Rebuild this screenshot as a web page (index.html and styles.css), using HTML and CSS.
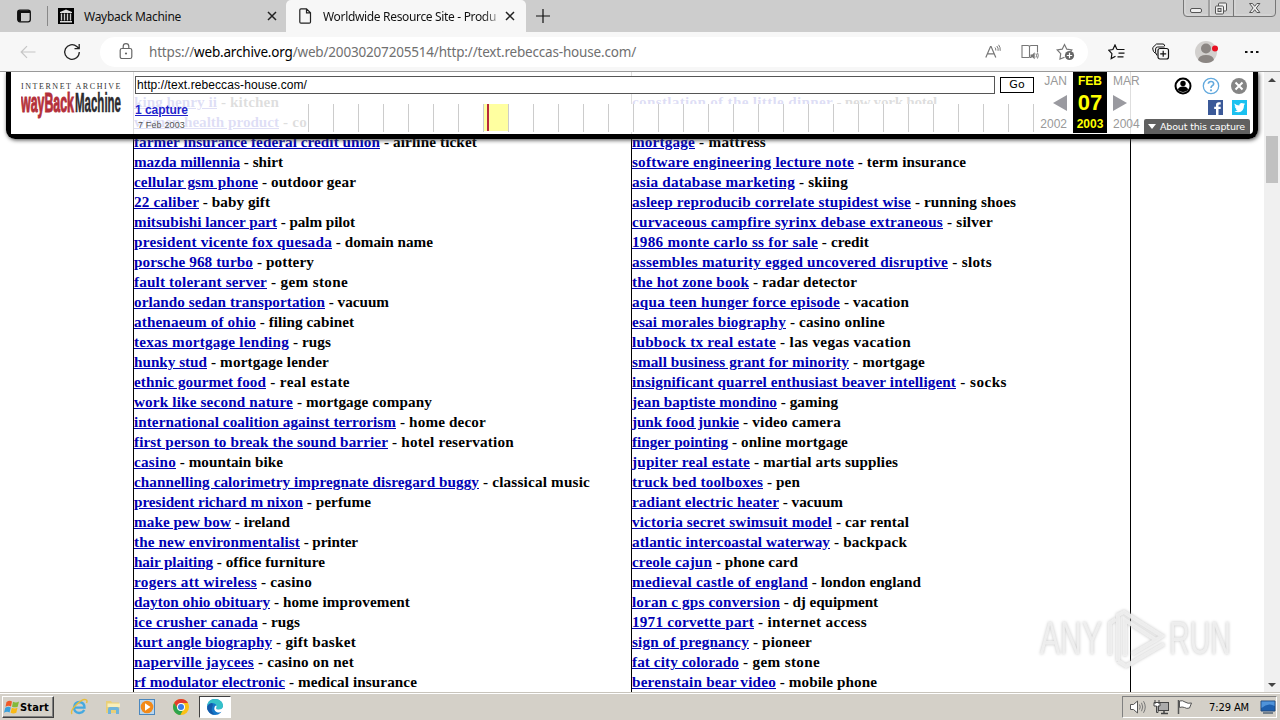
FILE: index.html
```html
<!DOCTYPE html>
<html lang="en">
<head>
<meta charset="utf-8">
<title>Worldwide Resource Site</title>
<link rel="stylesheet" href="styles.css">
</head>
<body>
<div class="tabs">
  <svg class="tab-actions" width="16" height="16" viewBox="0 0 16 16"><rect x="1.7" y="2.2" width="12.6" height="11.600" rx="2.2" fill="none" stroke="#111" stroke-width="1.3"/><path d="M2 2.500h12v2.500H5V13.500H2z" fill="#111"/></svg>
  <div class="tab">
    <svg width="16" height="16" viewBox="0 0 16 16"><rect width="16" height="16" fill="#000"/><path d="M8 1.5 14 4v1H2V4zM2 13h12v1.5H2z" fill="#ddd"/><path d="M3.5 5.5v7M6.5 5.5v7M9.5 5.5v7M12.5 5.5v7" stroke="#ccc" stroke-width="1.4"/></svg>
    <span class="tab-title" data-w="97">Wayback Machine</span>
    <svg class="x" width="10" height="10" viewBox="0 0 10 10"><path d="M1 1l8 8M9 1l-8 8" stroke="#222" stroke-width="1.5"/></svg>
  </div>
  <div class="tab active">
    <svg width="14" height="16" viewBox="0 0 14 16"><path d="M3 .8h5.500l4 4V14q0 1.200-1.200 1.200H3q-1.200 0-1.200-1.200V2Q1.800 .8 3 .8zM8.500 .8v4h4" fill="none" stroke="#222" stroke-width="1.200"/></svg>
    <span class="tab-title fade" data-w="173">Worldwide Resource Site - Produ</span>
    <svg class="x" width="10" height="10" viewBox="0 0 10 10"><path d="M1 1l8 8M9 1l-8 8" stroke="#222" stroke-width="1.5"/></svg>
  </div>
  <svg class="plus" width="14" height="14" viewBox="0 0 14 14"><path d="M7 0v14M0 7h14" stroke="#111" stroke-width="1.2"/></svg>
  <svg class="winbtns" width="94" height="17" viewBox="0 0 94 17"><path d="M.5 0v13q0 3.500 3.500 3.500h85q3.500 0 3.500-3.500V0M26 0v16M50.500 0v16" fill="none" stroke="#777"/><path d="M2 0v12q0 3 3 3h20M27.500 0v15H49M52 0v15h36" fill="none" stroke="#ddd" stroke-width=".8"/><rect x="7.500" y="8.500" width="11" height="4" rx="1.500" fill="#eee" stroke="#555"/><rect x="35.500" y="3" width="8" height="8" rx="1" fill="#eee" stroke="#555"/><rect x="32.500" y="6" width="8" height="8" rx="1" fill="#eee" stroke="#555"/><rect x="35" y="8.500" width="3" height="3" fill="#ccc" stroke="#555"/><path d="M66.500 3.500h3l2.200 2.800 2.200-2.800h3l-3.600 4.500 3.600 4.500h-3l-2.200-2.800-2.200 2.800h-3L70.100 8z" fill="#eee" stroke="#555"/></svg>
</div>
<div class="toolbar">
  <svg class="back" width="16" height="14" viewBox="0 0 16 14"><path d="M15.500 7H1.500M7 1.200 1.200 7 7 12.800" fill="none" stroke="#c6c6c6" stroke-width="1.200"/></svg>
  <svg class="reload" width="18" height="18" viewBox="0 0 18 18"><path d="M16.300 9A7.300 7.300 0 1 1 13.800 3.500L16 5.500M16.200 1v4.700h-4.700" fill="none" stroke="#222" stroke-width="1.300"/></svg>
  <div class="address">
    <svg width="14" height="18" viewBox="0 0 14 18"><rect x="1.200" y="5.500" width="11.600" height="10" rx="1.800" fill="none" stroke="#666" stroke-width="1.200"/><path d="M4.200 5.500V3.500a2.800 2.800 0 0 1 5.600 0v2" fill="none" stroke="#666" stroke-width="1.200"/><circle cx="7" cy="10.500" r="1.100" fill="#666"/></svg>
    <span class="url" data-w="487">https://<b>web.archive.org</b>/web/20030207205514/http://text.rebeccas-house.com/</span>
    <svg class="aloud" width="16" height="16" viewBox="0 0 16 16"><path d="M.8 13.500 5.500 2.500h.6l4.700 11M2.500 9.800h6.600" fill="none" stroke="#777" stroke-width="1.200"/><path d="M10 3.500q1 1.300.8 3M11.800 2q1.800 2 1.300 4.800M13.600.8q2 2.500 1.600 6" fill="none" stroke="#777"/></svg>
    <svg class="reader" width="18" height="16" viewBox="0 0 18 16"><path d="M8.500 2v11.500M8 13.500H1V1.500h6q1.500 0 1.500 1 0-1 1.500-1h6.500V8M8.500 13.500h2" fill="none" stroke="#777" stroke-width="1.100"/><path d="M9.500 10.500h1.800l2.400-2.200v7l-2.400-2H9.500z" fill="#777"/><path d="M15 9.500q1 2 0 4M16.500 8.500q1.500 3 0 6" fill="none" stroke="#777"/></svg>
    <svg class="fav" width="19" height="18" viewBox="0 0 19 18"><path d="M8.500 14.200 4 16l.7-5.300L1.200 7l5-.8L8.500 1.500l2.300 4.700 5 .8-1.300 1.600" fill="none" stroke="#777" stroke-width="1.200"/><circle cx="13.500" cy="12.500" r="4.600" fill="#666"/><path d="M13.500 9.800v5.400M10.800 12.500h5.400" stroke="#fff" stroke-width="1.200"/></svg>
  </div>
  <svg class="favs" width="18" height="16" viewBox="0 0 18 16"><path d="M9 5.500 7 1 4.900 5.500.8 6.200 3.900 9.700 3.200 14.600 7.500 12.200M9 5.500h7.500M10.500 9.200h6M9.500 12.800h6" fill="none" stroke="#111" stroke-width="1.200"/></svg>
  <svg class="coll" width="18" height="17" viewBox="0 0 18 17"><path d="M3.500 10.500Q.8 8.500.8 6V4.500L4.500 1H11q1.500 0 1.700 2M5 12.500 3.600 9.500V6q0-2 2-2h7" fill="none" stroke="#111" stroke-width="1"/><rect x="6" y="5.500" width="10.500" height="10.500" rx="2" fill="#f7f7f7" stroke="#111" stroke-width="1.200"/><path d="M11.200 7.800v6M8.200 10.800h6" stroke="#111" stroke-width="1.200"/></svg>
  <svg class="avatar" width="24" height="24" viewBox="0 0 24 24"><circle cx="11" cy="12" r="11" fill="#d2d0ce"/><circle cx="11" cy="8.500" r="5" fill="#8b8683"/><path d="M3 20q1-5 8-5t8 5q-3 3-8 3t-8-3z" fill="#8b8683"/><circle cx="20" cy="8.500" r="3" fill="#e81123"/></svg>
  <svg class="dots" width="14" height="4" viewBox="0 0 14 4"><path d="M0 1h2.500v2H0zM5.500 1H8v2H5.500zM11 1h2.500v2H11z" fill="#111"/></svg>
</div>
<div class="view">
  <div class="page">
    <div class="col" id="left"></div>
    <div class="col" id="right"></div>
  </div>
  <div class="scroll">
    <svg width="8" height="4" viewBox="0 0 8 4"><path d="M4 0 8 4H0z" fill="#444"/></svg>
    <div class="thumb"></div>
    <svg width="8" height="4" viewBox="0 0 8 4"><path d="M0 0h8L4 4z" fill="#444"/></svg>
  </div>
  <div class="wayback">
    <div class="logo">
      <span class="ia" data-w="101">INTERNET ARCHIVE</span>
      <svg width="102" height="34" viewBox="0 0 102 34"><g font-family="Liberation Sans Narrow, Liberation Sans, sans-serif" font-weight="bold" font-size="22"><text transform="translate(0 22) scale(1 1.250)" textLength="53" lengthAdjust="spacingAndGlyphs" fill="#b4303a" stroke="#b4303a" stroke-width=".9">wayBack</text><text transform="translate(54 22) scale(1 1.250)" textLength="46" lengthAdjust="spacingAndGlyphs" fill="#2b2b2f" stroke="#2b2b2f" stroke-width=".4">Machine</text></g></svg>
    </div>
    <div class="middle">
      <div class="query"><div class="field"><span data-w="170">http://text.rebeccas-house.com/</span></div><div class="go">Go</div></div>
      <div class="graph-row">
        <div class="captures"><a data-w="53">1 capture</a><span data-w="47">7 Feb 2003</span></div>
        <div class="graph"><div class="year"></div></div>
      </div>
    </div>
    <div class="cal side prev"><span>JAN</span><svg width="14" height="16" viewBox="0 0 14 16"><path d="M14 0v16L0 8z" fill="#9a9aa0"/></svg><span>2002</span></div>
    <div class="cal now"><b>FEB</b><b class="day">07</b><b>2003</b></div>
    <div class="cal side next"><span>MAR</span><svg width="14" height="16" viewBox="0 0 14 16"><path d="M0 0v16l14-8z" fill="#9a9aa0"/></svg><span>2004</span></div>
    <div class="tools">
      <div class="icons">
        <svg width="18" height="18" viewBox="0 0 18 18"><circle cx="9" cy="9" r="7.500" fill="#fff" stroke="#000" stroke-width="2"/><circle cx="9" cy="6.500" r="2.700"/><path d="M4 13q0-3.500 5-3.500t5 3.500q-2 2-5 2t-5-2z"/></svg>
        <svg width="18" height="18" viewBox="0 0 18 18"><circle cx="9" cy="9" r="7.700" fill="#fff" stroke="#62a9dd" stroke-width="1.300"/><path d="M6.300 6.800Q6.500 4.500 9 4.500t2.700 2.200Q11.700 8 10.200 8.800 9 9.500 9 11" fill="none" stroke="#62a9dd" stroke-width="1.600"/><circle cx="9" cy="13.300" r="1.100" fill="#62a9dd"/></svg>
        <svg width="18" height="18" viewBox="0 0 18 18"><circle cx="9" cy="9" r="8" fill="#858585"/><path d="M5.500 5.500l7 7M12.500 5.500l-7 7" stroke="#fff" stroke-width="2"/></svg>
      </div>
      <div class="social">
        <svg width="15" height="15" viewBox="0 0 15 15"><rect width="15" height="15" fill="#3b5998"/><path d="M10.500 15V9h2.200V6.700h-2.200V5.300q0-.8 1-.8h1.200V2.200h-2Q8 2.200 8 5v1.700H6.200V9H8v6z" fill="#fff"/></svg>
        <svg width="15" height="15" viewBox="0 0 15 15"><rect width="15" height="15" fill="#1bc1f0"/><path d="M2.500 3.500Q4.500 5.500 7.300 5.600 7.300 3 9.800 3q1 0 1.600.6l1.400-.5-.8 1.200 1-.2-1 1.200Q12 11.800 6.500 12.300q-2.500 0-4.200-1 2 0 3.300-1-1.700-.3-2-1.700h1Q2.800 7.800 2.700 6.200l1 .2Q2 5 2.500 3.500z" fill="#fff"/></svg>
      </div>
      <div class="about"><svg width="8" height="5" viewBox="0 0 8 5"><path d="M0 0h8L4 5z" fill="#fff"/></svg><span data-w="85">About this capture</span></div>
    </div>
  </div>
  <svg class="watermark" width="200" height="70" viewBox="0 0 200 70">
    <g class="shade"><text x="4" y="50" textLength="62" lengthAdjust="spacingAndGlyphs">ANY</text><text x="133" y="50" textLength="62" lengthAdjust="spacingAndGlyphs">RUN</text>
    <path d="M74 51V19l6-4M82 57V11l6-3 38 24-6 4-31-20v36M90 62l38-22M82 57l8 5 6-3M96 50l24-14"/></g>
  </svg>
</div>
<div class="taskbar">
  <div class="start">
    <svg width="16" height="16" viewBox="0 0 16 16"><path d="M2.500 3q3-2 5.500-.5L7 7.500Q4.500 6 1.500 7.800z" fill="#ef5a28"/><path d="M9 2.700q3 1.500 6-.2L13.700 7.700Q11 9 8 7.700z" fill="#83b93b"/><path d="M1.300 8.800q3-1.800 5.500-.3l-1.200 5Q3 12 0 13.800z" fill="#39a0dc"/><path d="M7.800 8.800q3 1.500 5.700 0l-1.200 5q-3 1.500-5.700 0z" fill="#f9b916"/></svg>
    <b data-w="29">Start</b>
  </div>
  <div class="quick">
    <svg width="18" height="18" viewBox="0 0 18 18"><path d="M14.300 12Q12.500 15 9.200 15 4 14.500 4 9.500 4.500 4 9.500 4q5 .5 5 5.700H5" fill="none" stroke="#45a9e0" stroke-width="2.300"/><path d="M2 16Q0 13 6 7 13 0 16.500 2q1 1 0 3" fill="none" stroke="#e8bd3a" stroke-width="1.400"/></svg>
    <svg width="18" height="18" viewBox="0 0 18 18"><path d="M2 3h5l1 1.500h7V15H2z" fill="#e9cf78"/><path d="M3.500 5.500H16V9H3.500z" fill="#f8eebb"/><path d="M4 16v-5q0-2 2-2h7q2 0 2 2v5h-3v-4H7v4z" fill="#6fb4db"/></svg>
    <svg width="18" height="18" viewBox="0 0 18 18"><rect x="1.500" y="1.500" width="15" height="15" fill="#b9d6ef" stroke="#4b87be"/><circle cx="9" cy="9" r="6.300" fill="#f28a1a"/><path d="M7 5.300 12.500 9 7 12.700z" fill="#fff"/></svg>
    <svg width="18" height="18" viewBox="0 0 18 18"><circle cx="9" cy="9" r="8" fill="#fbc116"/><path d="M2.100 5A8 8 0 0 1 16 5H9L6 11z" fill="#e33b2e"/><path d="M2.100 5 6 11l5 1-2.700 5A8 8 0 0 1 2.100 5z" fill="#2da44e"/><circle cx="9" cy="9" r="4" fill="#fff"/><circle cx="9" cy="9" r="3" fill="#3b7de8"/></svg>
    <div class="pressed"><svg width="18" height="18" viewBox="0 0 18 18"><circle cx="9" cy="9" r="8" fill="#1477c9"/><path d="M1.200 8Q2 1 9 1q7.500.5 8 6.500.3 4-4.500 4-2.500 0-2.500-1.500 1-1 .5-2.500Q9.500 5 6 5 3 5.200 1.200 8z" fill="#35c1c9"/><path d="M10 10q1-1 .5-2.500-1 0-1.700 1-1.600 3.500 1.700 5.500 3 1.300 5.800-.5l.7.500-2 2.500 3-1V9.500l-1-.5q-1 2.500-4.500 2.500-2.500 0-2.500-1.500z" fill="#fff"/><path d="M7 7Q3.500 12 8.500 16.800 3 16 1.200 11 1 6 6 5z" fill="#155aa8"/></svg></div>
  </div>
  <div class="tray">
    <svg width="18" height="16" viewBox="0 0 18 16"><path d="M1.500 5.500h3L8.500 2v12l-4-3.500h-3z" fill="#fff" stroke="#555"/><path d="M10.500 5.500q1.500 2.500 0 5M12.500 3.800q2.500 4.200 0 8.400M14.500 2.200q3.500 5.800 0 11.600" fill="none" stroke="#777"/></svg>
    <svg width="18" height="16" viewBox="0 0 18 16"><rect x="5.500" y="3.500" width="10" height="8" fill="#aaa" stroke="#444"/><path d="M8 14.500h7M11 12v2" stroke="#444" stroke-width="1.500"/><path d="M2 1v4M6 1v4M1 3.500h6V7H5v6.500H3.500V7H1z" fill="#fff" stroke="#444"/></svg>
    <svg width="18" height="16" viewBox="0 0 18 16"><path d="M1.500 1v14" stroke="#555" stroke-width="1.500"/><path d="M2.500 2q3-1 5.500 1 3 2 6.500 1l-2 5q-3 1-5-.5-2.500-1-5 0z" fill="#fff" stroke="#555"/></svg>
    <span class="clock" data-w="40">7:29 AM</span>
    <svg width="16" height="14" viewBox="0 0 16 14"><path d="M1 1h14v10H1z" fill="#1d5fae" stroke="#244a7a"/><path d="M1.500 8Q8 2 14.500 6V1.500h-13z" fill="#4f93da"/><path d="M3 13h10" stroke="#567" stroke-width="1.500"/></svg>
  </div>
</div>
<script src="rows.js"></script>
</body>
</html>
```
FILE: styles.css
```css
* { box-sizing: border-box; }
body { margin: 0; width: 1280px; height: 720px; overflow: hidden; display: flex; flex-direction: column; font-family: "Liberation Sans", Arial, sans-serif; background: #fff; }
svg { display: block; flex: none; }
[data-w] { white-space: pre; }

.tabs { height: 32px; flex: none; background: #cdcdcd; display: flex; align-items: center; font: 12px "Noto Sans", "Open Sans", sans-serif; color: #111; }
.tab-actions { margin-left: 16px; }
.tab { width: 239px; height: 32px; margin-left: 15px; padding: 0 9px 0 10px; display: flex; align-items: center; border-left: 1px solid #888; border-image: linear-gradient(transparent 20%, #888 20%, #888 80%, transparent 80%) 1; }
.tab .tab-title { margin-left: 10px; }
.tab .x { margin-left: auto; }
.tab.active { background: #f7f7f7; margin-left: 0; width: 240px; border: 0; border-radius: 5px 5px 0 0; padding: 0 11px 0 12px; }
.active .tab-title { margin-left: 11px; }
.fade { -webkit-mask-image: linear-gradient(90deg, #000 92%, #0006); mask-image: linear-gradient(90deg, #000 92%, #0006); }
.plus { margin-left: 10px; }
.winbtns { margin-left: auto; margin-right: 3px; align-self: flex-start; }

.toolbar { height: 39px; flex: none; background: #f7f7f7; display: flex; align-items: center; }
.back { margin-left: 20px; }
.reload { margin-left: 27px; }
.address { margin-left: 19px; width: 988px; height: 30px; border-radius: 15px; background: #fff; display: flex; align-items: center; padding-left: 19px; }
.url { margin-left: 16px; font: 13.500px "Noto Sans", "Open Sans", sans-serif; color: #707070; }
.url b { font-weight: normal; color: #000; }
.aloud { margin-left: auto; }
.reader { margin-left: 20px; }
.fav { margin: 0 13px 0 17px; }
.favs { margin-left: 20px; }
.coll { margin-left: 26px; }
.avatar { margin-left: 25px; }
.dots { margin-left: 26px; }

.view { height: 622px; flex: none; position: relative; overflow: hidden; border-top: 1px solid #999; display: flex; }
.page { width: 998px; margin-left: 133px; display: flex; border-right: 1px solid #000; font: bold 15.200px/20px "Liberation Serif", "Times New Roman", serif; color: #000; }
.col { width: 498px; flex: none; border-left: 1px solid #000; padding-top: 20px; }
.col + .col { width: 499px; }
.row { height: 20px; white-space: pre; display: flex; }
.row a { color: #0000b4; text-decoration: underline; }
.scroll { width: 16px; margin-left: auto; background: #f0f0f0; display: flex; flex-direction: column; align-items: center; padding: 6px 0; }
.thumb { width: 12px; height: 47px; margin: 54px 0 auto; background: #c1c1c1; }

.wayback { position: absolute; left: 6px; top: 0; width: 1252px; height: 67px; border: 5px solid #000; border-top: 0; border-radius: 0 0 9px 9px; background: rgba(255,255,255,.87); background-clip: padding-box; box-shadow: 1px 1px 4px #444; display: flex; }
.logo { width: 122px; flex: none; padding: 10px 0 0 10px; background: #fff; }
.ia { display: block; font: 8px/9px "Liberation Serif", serif; color: #333; width: 101px; }
.logo svg { margin-top: -1px; }
.middle { width: 901px; flex: none; padding: 4px 0 0 2px; }
.query { display: flex; align-items: center; gap: 5px; }
.field { width: 860px; height: 18px; border: 1px solid #555; background: #fff; padding-left: 1px; font: 12px/16px "Liberation Sans", sans-serif; color: #000; }
.go { width: 34px; height: 16px; border: 1px solid #000; background: #fff; font: 11px/14px "DejaVu Sans", "Liberation Sans", sans-serif; text-align: center; }
.graph-row { display: flex; padding-top: 10px; }
.captures { width: 173px; height: 29px; color: #555; }
.captures a, .captures span { display: block; width: max-content; }
.captures a { font: bold 12px/14px "Liberation Sans", sans-serif; color: #2424cc; text-decoration: underline; margin-top: -1px; }
.captures span { font-size: 9px; line-height: 13px; margin: 2px 0 0 3px; }
.graph { width: 726px; height: 28px; background: repeating-linear-gradient(90deg, #ccc 0 1px, #fff 1px 25px); }
.year { width: 24px; height: 27px; margin-left: 176px; background: #ffffa0; border-left: 3px solid #ffffa0; }
.year::before { content: ""; display: block; width: 2px; height: 27px; background: #b8283c; }
.cal { width: 34px; height: 61px; flex: none; display: flex; flex-direction: column; align-items: center; justify-content: space-between; padding: 3px 0 2px; font-size: 12px; line-height: 13px; color: #999; }
.side span { white-space: nowrap; }
.prev { margin-left: 5px; padding-right: 6px; align-items: flex-end; }
.next { margin-left: 6px; align-items: flex-start; }
.now { background: #000; color: #ff0; }
.now .day { font-size: 22px; line-height: 22px; }
.tools { margin-left: -3px; width: 109px; flex: none; display: flex; flex-direction: column; }
.icons { display: flex; justify-content: flex-end; gap: 10px; padding: 5px 5px 0 0; }
.social { display: flex; justify-content: flex-end; gap: 9px; padding: 5px 6px 0 0; }
.about { width: 106px; height: 15px; margin-top: 4px; background: #606060; border-radius: 2px 2px 0 0; color: #fff; display: flex; align-items: center; gap: 4px; padding-left: 4px; font: 9.500px "DejaVu Sans", sans-serif; }
.watermark { position: absolute; left: 1036px; top: 532px; filter: drop-shadow(0 0 1.500px #bbb); }
.shade { fill: #f2f2f2; font: 46px "Liberation Sans Narrow", "Liberation Sans", sans-serif; opacity: .85; }
.shade path { fill: none; stroke: #f2f2f2; stroke-width: 4; }

.taskbar { height: 27px; flex: none; background: #d4d0c8; border-top: 1px solid #fff; box-shadow: 0 -1px #c8c4bc; display: flex; align-items: center; position: relative; }
.start { width: 52px; height: 22px; margin-left: 2px; background: #d4d0c8; border: 1px solid; border-color: #fff #404040 #404040 #fff; box-shadow: inset -1px -1px #808080; display: flex; align-items: center; padding-left: 1px; gap: 0; font-size: 11px; color: #000; font-family: "DejaVu Sans Condensed", "DejaVu Sans", sans-serif; }
.quick { display: flex; align-items: center; gap: 16px; margin-left: 16px; }
.pressed { width: 32px; height: 22px; margin-left: -7px; background: #fff; border: 1px solid; border-color: #404040 #fff #fff #404040; display: flex; align-items: center; justify-content: center; }
.tray { margin-left: auto; margin-right: 3px; width: 155px; height: 22px; border: 1px solid; border-color: #808080 #fff #fff #808080; display: flex; align-items: center; padding-left: 6px; gap: 6px; }
.clock { font: 11px "DejaVu Sans Condensed", "DejaVu Sans", sans-serif; margin: 0 5px 0 8px; }
```
FILE: rows.js
```js
// Each entry: link text | category | link width | full row width
const left = [
  "king henry ii|kitchen|83|145", "women health product|co|145|173",
  "farmer insurance federal credit union|airline ticket|246|343", "mazda millennia|shirt|106|149",
  "cellular gsm phone|outdoor gear|124|222", "22 caliber|baby gift|65|136",
  "mitsubishi lancer part|palm pilot|143|221", "president vicente fox quesada|domain name|198|299",
  "porsche 968 turbo|pottery|119|180", "fault tolerant server|gem stone|133|214",
  "orlando sedan transportation|vacuum|191|255", "athenaeum of ohio|filing cabinet|122|220",
  "texas mortgage lending|rugs|155|197", "hunky stud|mortgage lender|73|195",
  "ethnic gourmet food|real estate|132|216", "work like second nature|mortgage company|159|298",
  "international coalition against terrorism|home decor|262|352", "first person to break the sound barrier|hotel reservation|254|380",
  "casino|mountain bike|42|149", "channelling calorimetry impregnate disregard buggy|classical music|345|456",
  "president richard m nixon|perfume|169|237", "make pew bow|ireland|97|156",
  "the new environmentalist|printer|166|224", "hair plaiting|office furniture|79|191",
  "rogers att wireless|casino|123|178", "dayton ohio obituary|home improvement|136|276",
  "ice crusher canada|rugs|124|166", "kurt angle biography|gift basket|138|222",
  "naperville jaycees|casino on net|120|220", "rf modulator electronic|medical insurance|151|283"
];
const right = [
  "constlation of the little dinner|new york hotel|201|305", "|",
  "mortgage|mattress|63|134", "software engineering lecture note|term insurance|222|334",
  "asia database marketing|skiing|163|216", "asleep reproducib correlate stupidest wise|running shoes|279|384",
  "curvaceous campfire syrinx debase extraneous|silver|311|361", "1986 monte carlo ss for sale|credit|186|237",
  "assembles maturity egged uncovered disruptive|slots|316|360", "the hot zone book|radar detector|117|225",
  "aqua teen hunger force episode|vacation|208|277", "esai morales biography|casino online|154|253",
  "lubbock tx real estate|las vegas vacation|144|279", "small business grant for minority|mortgage|217|293",
  "insignificant quarrel enthusiast beaver intelligent|socks|324|375", "jean baptiste mondino|gaming|145|206",
  "junk food junkie|video camera|107|209", "finger pointing|online mortgage|96|216",
  "jupiter real estate|martial arts supplies|118|266", "truck bed toolboxes|pen|131|168",
  "radiant electric heater|vacuum|147|211", "victoria secret swimsuit model|car rental|200|277",
  "atlantic intercoastal waterway|backpack|198|275", "creole cajun|phone card|80|166",
  "medieval castle of england|london england|176|289", "loran c gps conversion|dj equipment|148|246",
  "1971 corvette part|internet access|122|235", "sign of pregnancy|pioneer|117|180",
  "fat city colorado|gem stone|107|188", "berenstain bear video|mobile phone|144|245"
];

function build(id, rows) {
  const col = document.getElementById(id);
  for (const entry of rows) {
    const [link, category, linkWidth, rowWidth] = entry.split("|");
    const row = document.createElement("div");
    row.className = "row";
    if (link) {
      const a = document.createElement("a");
      a.textContent = link;
      a.dataset.w = linkWidth;
      const span = document.createElement("span");
      span.textContent = " - " + category;
      span.dataset.w = rowWidth - linkWidth;
      row.append(a, span);
    }
    col.append(row);
  }
}
build("left", left);
build("right", right);

for (const el of document.querySelectorAll("[data-w]")) {
  const range = document.createRange();
  range.selectNodeContents(el);
  const natural = range.getBoundingClientRect().width;
  el.style.letterSpacing = (el.dataset.w - natural) / el.textContent.length + "px";
}
```
